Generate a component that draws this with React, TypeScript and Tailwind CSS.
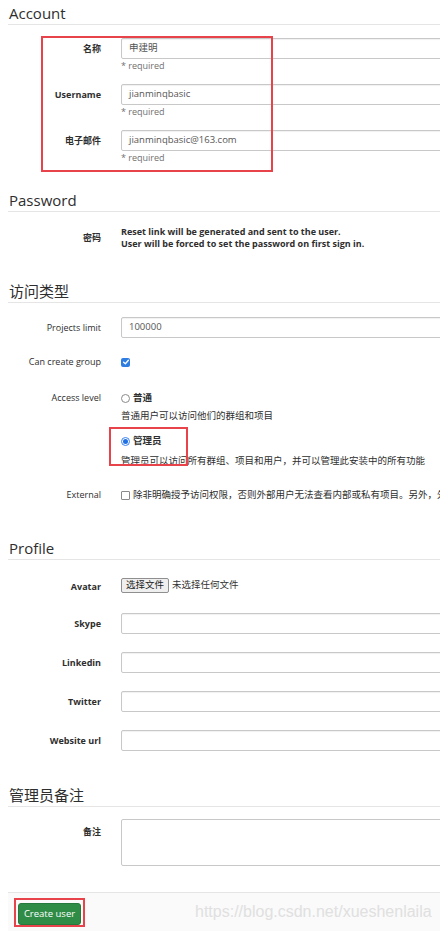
import React from "react";

const font = "font-['Open_Sans','Noto_Sans_CJK_SC',sans-serif]";

function Heading({ children, className = "" }: { children: React.ReactNode; className?: string }) {
  return (
    <div className={`h-[22px] pl-[1px] text-[15px] leading-[20px] pb-[1px] border-b border-[#e5e5e5] text-[#2e2e2e] ${className}`}>
      {children}
    </div>
  );
}

function Label({ children, className = "" }: { children: React.ReactNode; className?: string }) {
  return (
    <div className={`w-[93px] shrink-0 flex justify-end text-right font-bold text-[9px] text-[#2e2e2e] ${className}`}>
      {children}
    </div>
  );
}

function TextInput({ value = "", className = "" }: { value?: string; className?: string }) {
  return (
    <div
      className={`w-[540px] h-[21px] border border-[#c8c8c8] rounded-[2px] bg-white px-[7px] flex items-center text-[9.5px] text-[#555] shadow-[inset_0_1px_1px_rgba(0,0,0,0.06)] ${className}`}
    >
      {value}
    </div>
  );
}

function Required() {
  return <div className="h-[14px] text-[9px] leading-[14px] text-[#707070]">* required</div>;
}

function Radio({ checked }: { checked?: boolean }) {
  return checked ? (
    <span className="w-[9px] h-[9px] rounded-full border border-[#3b82f6] bg-white flex items-center justify-center shrink-0">
      <span className="w-[5px] h-[5px] rounded-full bg-[#1f6fe5]" />
    </span>
  ) : (
    <span className="w-[9px] h-[9px] rounded-full border border-[#8a8a8a] bg-white shrink-0" />
  );
}

export default function App() {
  return (
    <div className={`relative w-[440px] h-[931px] overflow-hidden bg-white ${font} text-[#2e2e2e]`}>
      <div className="w-[700px] pl-[8px]">
        {/* Account */}
        <Heading className="mt-[3px]">Account</Heading>

        <div className="mt-[13px] flex">
          <Label className="h-[21px] items-center">名称</Label>
          <div className="ml-[20px]">
            <TextInput value="申建明" />
            <Required />
          </div>
        </div>
        <div className="mt-[11px] flex">
          <Label className="h-[21px] items-center">Username</Label>
          <div className="ml-[20px]">
            <TextInput value="jianminqbasic" />
            <Required />
          </div>
        </div>
        <div className="mt-[11px] flex">
          <Label className="h-[21px] items-center">电子邮件</Label>
          <div className="ml-[20px]">
            <TextInput value="jianminqbasic@163.com" />
            <Required />
          </div>
        </div>

        {/* Password */}
        <Heading className="mt-[25px]">Password</Heading>
        <div className="mt-[14px] flex items-center">
          <Label className="leading-[14px]">密码</Label>
          <div className="ml-[20px] font-bold text-[9px] leading-[12px]">
            <div>Reset link will be generated and sent to the user.</div>
            <div>User will be forced to set the password on first sign in.</div>
          </div>
        </div>

        {/* Access */}
        <Heading className="mt-[31px]">访问类型</Heading>
        <div className="mt-[14px] flex">
          <Label className="h-[21px] items-center font-normal">Projects limit</Label>
          <div className="ml-[20px]">
            <TextInput value="100000" />
          </div>
        </div>
        <div className="mt-[17px] flex items-center h-[14px]">
          <Label className="font-normal">Can create group</Label>
          <div className="ml-[20px] flex items-center">
            <span className="w-[9px] h-[9px] rounded-[2px] bg-[#2f7de1] flex items-center justify-center">
              <svg viewBox="0 0 10 10" className="w-[8px] h-[8px]">
                <path d="M2 5.2 L4.2 7.2 L8 2.8" fill="none" stroke="white" strokeWidth="1.6" strokeLinecap="round" strokeLinejoin="round" />
              </svg>
            </span>
          </div>
        </div>
        <div className="mt-[22px] flex">
          <Label className="font-normal leading-[14px]">Access level</Label>
          <div className="ml-[20px] text-[9.5px] leading-[14px]">
            <div className="h-[14px] flex items-center gap-[3px]">
              <Radio />
              <span className="font-bold">普通</span>
            </div>
            <div className="h-[14px] mt-[4px]">普通用户可以访问他们的群组和项目</div>
            <div className="h-[14px] mt-[11px] flex items-center gap-[3px]">
              <Radio checked />
              <span className="font-bold">管理员</span>
            </div>
            <div className="h-[14px] mt-[6px] whitespace-nowrap">管理员可以访问所有群组、项目和用户，并可以管理此安装中的所有功能</div>
          </div>
        </div>
        <div className="mt-[20px] flex items-center h-[14px]">
          <Label className="font-normal">External</Label>
          <div className="ml-[20px] flex items-center gap-[3px] text-[9.5px] whitespace-nowrap">
            <span className="w-[9px] h-[9px] rounded-[1px] border border-[#8a8a8a] bg-white shrink-0" />
            <span>除非明确授予访问权限，否则外部用户无法查看内部或私有项目。另外，外部用户无法创建群组或项目。</span>
          </div>
        </div>

        {/* Profile */}
        <Heading className="mt-[36px]">Profile</Heading>
        <div className="mt-[17px] flex items-center h-[16px]">
          <Label className="pt-[3px]">Avatar</Label>
          <div className="ml-[20px] flex items-center text-[9.5px] whitespace-nowrap">
            <span className="h-[15px] px-[4px] border border-[#8f8f8f] rounded-[2px] bg-[#efefef] flex items-center text-[#222]">选择文件</span>
            <span className="ml-[3px] text-[#333]">未选择任何文件</span>
          </div>
        </div>
        <div className="mt-[20px] flex">
          <Label className="h-[21px] items-center">Skype</Label>
          <div className="ml-[20px]">
            <TextInput />
          </div>
        </div>
        <div className="mt-[18px] flex">
          <Label className="h-[21px] items-center">Linkedin</Label>
          <div className="ml-[20px]">
            <TextInput />
          </div>
        </div>
        <div className="mt-[18px] flex">
          <Label className="h-[21px] items-center">Twitter</Label>
          <div className="ml-[20px]">
            <TextInput />
          </div>
        </div>
        <div className="mt-[18px] flex">
          <Label className="h-[21px] items-center">Website url</Label>
          <div className="ml-[20px]">
            <TextInput />
          </div>
        </div>

        {/* Admin notes */}
        <Heading className="mt-[34px]">管理员备注</Heading>
        <div className="mt-[12px] flex">
          <Label className="pt-[6px] leading-[14px]">备注</Label>
          <div className="ml-[20px]">
            <div className="w-[540px] h-[47px] border border-[#c8c8c8] rounded-[2px] bg-white" />
          </div>
        </div>

        {/* Footer */}
        <div className="mt-[26px] h-[40px] border-t border-[#e5e5e5] bg-[#fafafa] pt-[10px] pl-[10px]">
          <button className="w-[63px] h-[22px] rounded-[3px] bg-[#2e8c47] border border-[#27783c] text-white text-[9.5px] flex items-center justify-center">
            Create user
          </button>
        </div>
      </div>

      {/* watermark */}
      <div className="absolute left-[195px] top-[902px] font-['Liberation_Sans',sans-serif] text-[16px] leading-[20px] text-[#e0e0e0] whitespace-nowrap">
        https://blog.csdn.net/xueshenlaila
      </div>

      {/* highlight frames */}
      <div className="absolute left-[41px] top-[36px] w-[232px] h-[136px] border-2 border-[#e8434b] pointer-events-none" />
      <div className="absolute left-[109px] top-[427px] w-[79px] h-[39px] border-2 border-[#e8434b] pointer-events-none" />
      <div className="absolute left-[14px] top-[898px] w-[71px] h-[29px] border-2 border-[#e8434b] pointer-events-none" />
    </div>
  );
}
